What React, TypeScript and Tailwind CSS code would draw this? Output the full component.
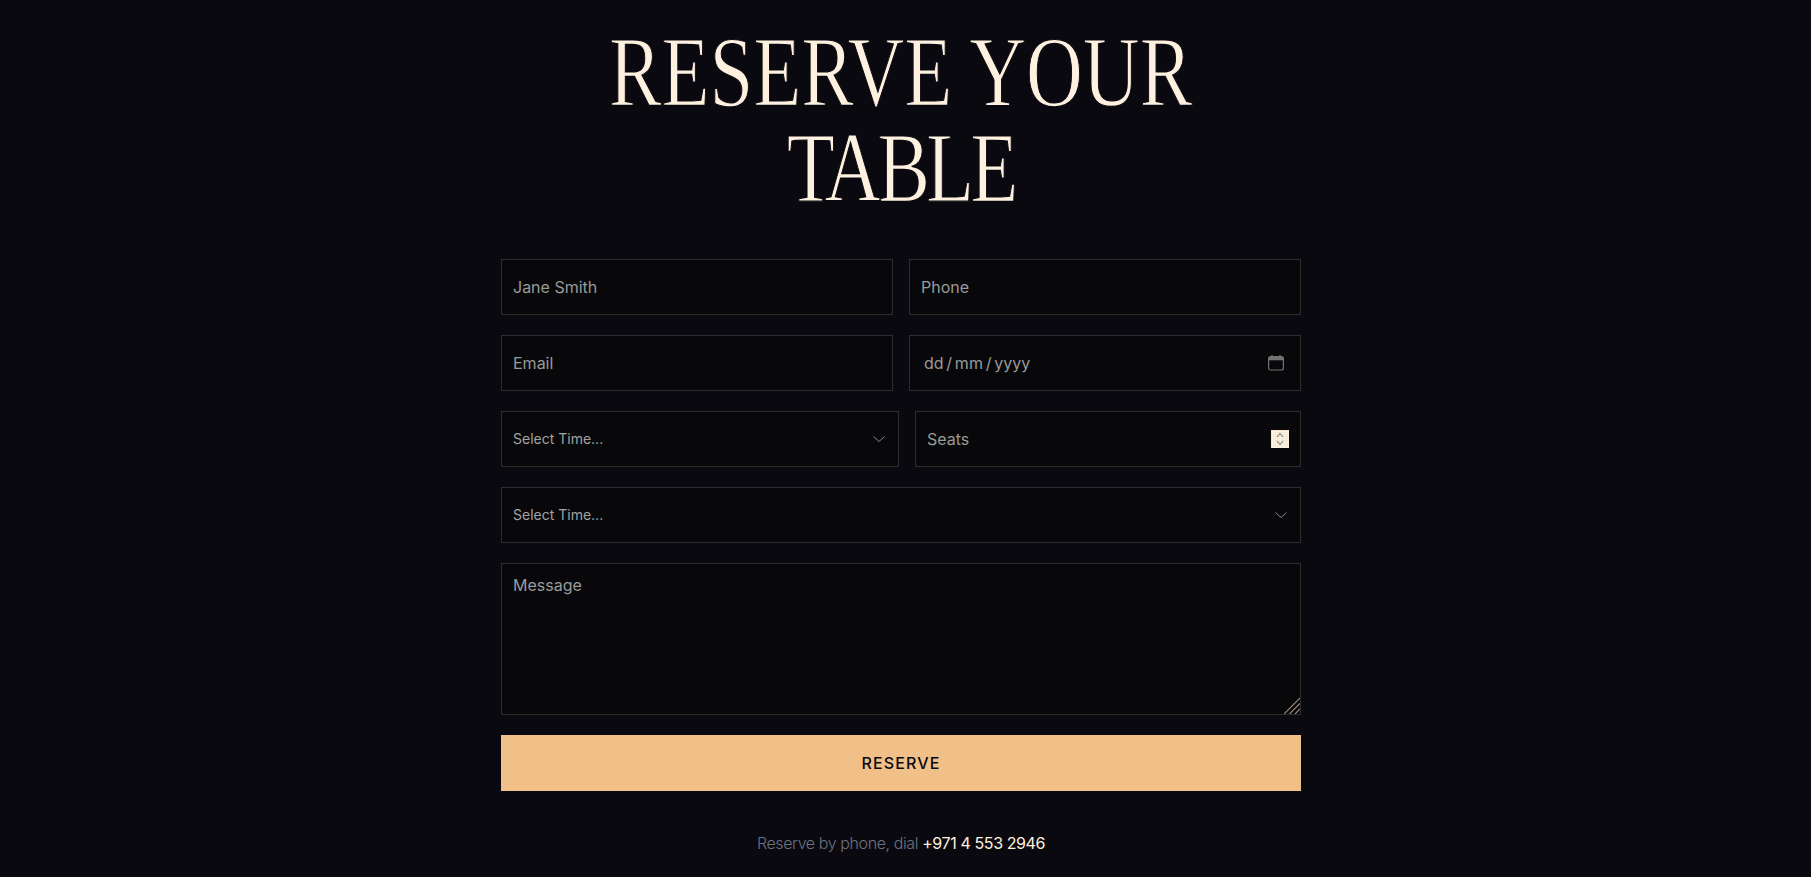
import React from "react";

const inter = "font-['Inter',sans-serif]";
const field = "h-14 w-full min-w-0 border border-[#2c2c2c] bg-[#08080a] px-[11px] text-base text-[#a3a3a3] outline-none placeholder:text-[#9a9a9a] " + inter;

function Chevron() {
  return (
    <svg className="pointer-events-none absolute right-[14px] top-[22px] h-3 w-3 text-[#8a8a8a]" viewBox="0 0 12 12" fill="none" stroke="currentColor" strokeWidth="1">
      <path d="M.5 3.5 6 8.5 11.5 3.5" />
    </svg>
  );
}

function TimeSelect({ className }: { className: string }) {
  return (
    <div className={"relative " + className}>
      <select className={"h-14 w-full appearance-none rounded-none border border-[#2c2c2c] bg-[#08080a] px-[11px] text-sm text-[#a3a3a3] outline-none " + inter}>
        <option>Select Time...</option>
      </select>
      <Chevron />
    </div>
  );
}

export default function App() {
  return (
    <main className={"flex min-h-[877px] flex-col items-center bg-[#0b0910] pt-[24px] pr-[9px] " + inter}>
      <h1 className="origin-center scale-x-[0.787] whitespace-nowrap text-center font-['Liberation_Serif',serif] text-[100px] font-normal leading-[96px] text-[#fff1df] [-webkit-text-stroke:1.2px_#0b0910]">
        RESERVE YOUR
        <br />
        <span className="tracking-[-5px]">TABLE</span>
      </h1>
      <form className="mt-[43px] flex w-[800px] flex-col gap-5">
        <div className="grid grid-cols-2 gap-4">
          <input className={field} placeholder="Jane Smith" />
          <input className={field} placeholder="Phone" />
        </div>
        <div className="grid grid-cols-2 gap-4">
          <input className={field} placeholder="Email" />
          <div className="relative">
            <input className={field + " pl-[14px] [word-spacing:-1.75px]"} placeholder="dd / mm / yyyy" />
            <svg className="pointer-events-none absolute right-[17px] top-[20px] h-4 w-4 text-[#737373]" viewBox="0 0 16 16" fill="none" stroke="currentColor" strokeWidth="1.2">
              <rect x="0.6" y="1.6" width="14.8" height="13.4" rx="2" />
              <path d="M0.8 3.6h14.4" strokeWidth="3.4" />
              <path d="M4 0v2M12 0v2" />
            </svg>
          </div>
        </div>
        <div className="flex gap-4">
          <TimeSelect className="w-[398px] shrink-0" />
          <div className="relative min-w-0 flex-1">
            <input
              type="number"
              className={field + " [&::-webkit-inner-spin-button]:appearance-none"}
              placeholder="Seats"
            />
            <svg className="pointer-events-none absolute right-[12px] top-[19px] h-[18px] w-[18px]" viewBox="0 0 18 18" fill="none">
              <defs>
                <pattern id="dither" width="2" height="2" patternUnits="userSpaceOnUse">
                  <rect width="2" height="2" fill="#fdf0df" />
                  <rect width="1" height="1" fill="#dfe6d8" />
                </pattern>
              </defs>
              <rect width="18" height="18" fill="url(#dither)" />
              <path d="M6 7 9 3.5 12 7M6 11 9 14.5 12 11" stroke="#8fa093" strokeWidth="1.2" />
            </svg>
          </div>
        </div>
        <TimeSelect className="w-full" />
        <div className="relative">
          <textarea
            className={"block h-[152px] w-full resize-none border border-[#2c2c2c] bg-[#08080a] px-[11px] py-[9px] text-base text-[#a3a3a3] outline-none placeholder:text-[#9a9a9a] " + inter}
            placeholder="Message"
          />
          <svg className="pointer-events-none absolute bottom-px right-px h-4 w-4" viewBox="0 0 16 16" fill="none" stroke="#9a8a76" strokeWidth="1.2">
            <path d="M0 16 16 0M5.5 16 16 5.5M11 16 16 11" />
          </svg>
        </div>
        <button type="button" className="h-14 w-full bg-[#f0c088] text-base font-medium tracking-[1.12px] text-[#0a0810]">
          RESERVE
        </button>
      </form>
      <p className="mt-[40px] text-base leading-6 font-light tracking-tight text-[#6b7280]">
        Reserve by phone, dial <a className="font-normal text-[#fff1df]">+971 4 553 2946</a>
      </p>
    </main>
  );
}
